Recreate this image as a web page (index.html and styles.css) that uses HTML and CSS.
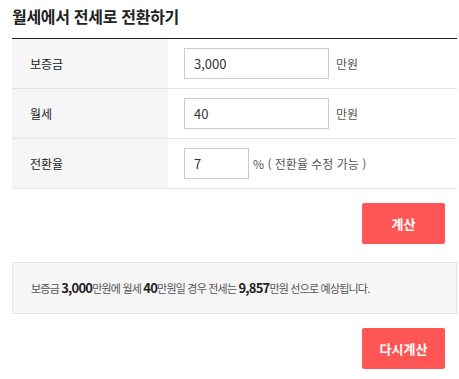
FILE: index.html
```html
<!DOCTYPE html>
<html lang="ko">

<head>
    <meta charset="UTF-8">
    <meta name="viewport" content="width=device-width, initial-scale=1.0">
    <title>월세에서 전세로 전환하기</title>
    <link rel="stylesheet" href="styles.css">
</head>

<body>
    <div class="calc">
        <h1 class="calc-title">월세에서 전세로 전환하기</h1>

        <div class="calc-table">
            <div class="calc-row">
                <div class="calc-label">보증금</div>
                <div class="calc-field">
                    <input type="text" class="calc-input" value="3,000">
                    <span class="calc-unit">만원</span>
                </div>
            </div>
            <div class="calc-row">
                <div class="calc-label">월세</div>
                <div class="calc-field">
                    <input type="text" class="calc-input" value="40">
                    <span class="calc-unit">만원</span>
                </div>
            </div>
            <div class="calc-row">
                <div class="calc-label">전환율</div>
                <div class="calc-field">
                    <input type="text" class="calc-input calc-input-small" value="7">
                    <span class="calc-unit calc-unit-rate">% ( 전환율 수정 가능 )</span>
                </div>
            </div>
        </div>

        <div class="calc-actions">
            <button type="button" class="calc-btn">계산</button>
        </div>

        <div class="calc-result">
            보증금 <strong>3,000</strong>만원에 월세 <strong>40</strong>만원일 경우 전세는 <strong>9,857</strong>만원 선으로 예상됩니다.
        </div>

        <div class="calc-actions">
            <button type="button" class="calc-btn">다시계산</button>
        </div>
    </div>
</body>

</html>
```

FILE: styles.css
```css
body {
    margin: 0;
    font-family: "Noto Sans CJK KR", "Noto Sans", sans-serif;
    color: #333;
    background: #fff;
}

.calc {
    width: 445px;
    margin-left: 12px;
}

.calc-title {
    margin: 0;
    height: 39px;
    padding-top: 4px;
    box-sizing: border-box;
    font-size: 16px;
    font-weight: 700;
    line-height: 24px;
    color: #222;
    border-bottom: 1px solid #222;
    letter-spacing: -0.3px;
}

.calc-row {
    display: flex;
    height: 50px;
    box-sizing: border-box;
    border-bottom: 1px solid #e5e5e5;
}

.calc-label {
    width: 156px;
    background: #f6f6f6;
    padding-left: 18px;
    box-sizing: border-box;
    display: flex;
    align-items: center;
    font-size: 12px;
    color: #222;
}

.calc-field {
    display: flex;
    align-items: center;
    padding-left: 16px;
}

.calc-input {
    width: 145px;
    height: 31px;
    box-sizing: border-box;
    border: 1px solid #ccc;
    padding: 0 9px;
    font-family: inherit;
    font-size: 13px;
    color: #333;
}

.calc-input-small {
    width: 65px;
}

.calc-unit {
    margin-left: 7px;
    font-size: 12px;
    color: #555;
}

.calc-unit-rate {
    margin-left: 4px;
}

.calc-actions {
    display: flex;
    justify-content: flex-end;
    padding: 14px 12px 18px 0;
}

.calc-btn {
    width: 83px;
    height: 41px;
    border: none;
    border-radius: 2px;
    background-color: #ff5555;
    color: #fff;
    font-family: inherit;
    font-size: 13px;
    font-weight: 700;
    cursor: pointer;
}

.calc-result {
    height: 52px;
    box-sizing: border-box;
    border: 1px solid #e5e5e5;
    background: #f6f6f6;
    padding: 0 0 0 18px;
    line-height: 50px;
    font-size: 11px;
    color: #555;
    letter-spacing: -0.8px;
    white-space: nowrap;
}

.calc-result strong {
    font-size: 13px;
    color: #222;
    letter-spacing: -0.8px;
}
```
